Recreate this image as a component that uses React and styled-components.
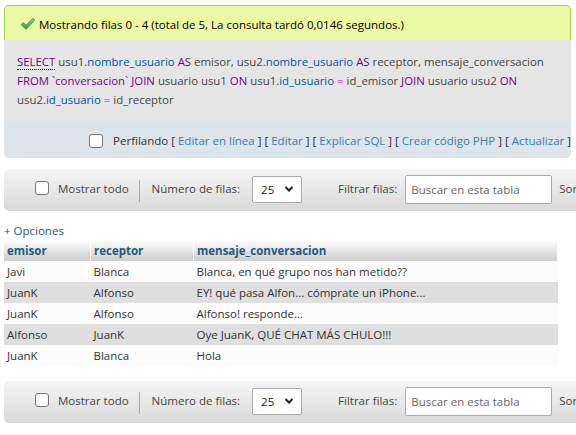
import React from "react";
import styled, { createGlobalStyle } from "styled-components";

const GlobalStyle = createGlobalStyle`
  html, body {
    margin: 0;
    padding: 0;
    background: #fff;
    overflow: hidden;
  }
  body {
    font-family: "Open Sans", "Noto Sans", sans-serif;
    font-size: 11.5px;
    color: #444;
  }
`;

const Page = styled.div`
  width: 576px;
  height: 435px;
  padding: 5px 0 0 4px;
  box-sizing: border-box;
  overflow: hidden;
`;

const Notice = styled.div`
  width: 567px;
  box-sizing: border-box;
`;

const Success = styled.div`
  display: flex;
  align-items: center;
  gap: 3px;
  height: 35px;
  padding: 2px 0 0 15px;
  box-sizing: border-box;
  background: #ebf8a4;
  border: 1px solid #a2d246;
  border-bottom: none;
  border-radius: 5px 5px 0 0;
  color: #000;
`;

const SqlBox = styled.div`
  background: #e5e5e5;
  padding: 12px 13px 14px;
  line-height: 19px;
  font-size: 11.4px;
  color: #444;
`;

const Kw = styled.span`
  color: #770088;
  ${(p) => p.$abbr && "border-bottom: 1px dotted #000;"}
`;

const Col = styled.span`
  color: #0055aa;
`;

const Op = styled.span`
  color: #ee00cc;
`;

const Tools = styled.div`
  display: flex;
  align-items: center;
  justify-content: flex-end;
  height: 35px;
  padding-right: 0;
  background: #dde4ea;
  border-radius: 0 0 5px 5px;
  color: #333;
`;

const Link = styled.a`
  color: #3a7ead;
  text-decoration: none;
`;

const Check = styled.span`
  display: inline-block;
  width: 12px;
  height: 12px;
  border: 1px solid #767676;
  border-radius: 3px;
  background: #fff;
  margin-right: ${(p) => p.$gap || 8}px;
`;

const NavBar = styled.div`
  display: flex;
  align-items: center;
  height: 42px;
  width: 600px;
  margin-top: ${(p) => p.$top}px;
  padding: 0 0 4px 31px;
  box-sizing: border-box;
  border-radius: 5px 0 0 5px;
  background: linear-gradient(#f6f6f6, #d9d9d9);
  color: #444;
  white-space: nowrap;
`;

const NavItem = styled.label`
  display: flex;
  align-items: center;
`;

const Sep = styled.span`
  display: inline-block;
  width: 1px;
  height: 22px;
  background: #aaa;
  margin: 6px 12px 0 10px;
`;

const SelectBox = styled.span`
  display: flex;
  align-items: center;
  justify-content: space-between;
  width: 50px;
  height: 27px;
  box-sizing: border-box;
  margin: 2px 0 0 12px;
  padding: 0 7px 0 8px;
  background: #fff;
  border: 1px solid #aaa;
  border-radius: 2px;
  color: #222;
`;

const Search = styled.span`
  display: flex;
  align-items: center;
  width: 147px;
  height: 29px;
  flex-shrink: 0;
  box-sizing: border-box;
  margin: 3px 7px 0 8px;
  padding-left: 5px;
  background: #fff;
  border: 1px solid #aaa;
  border-radius: 2px;
  color: #666;
`;

const FilterLabel = styled.span`
  margin-left: 36px;
`;

const Options = styled.div`
  margin-top: 11px;
  height: 18px;
  line-height: 18px;
  color: #235a81;
`;

const Table = styled.table`
  border-collapse: collapse;
  width: 554px;
`;

const Th = styled.th`
  text-align: left;
  font-weight: bold;
  color: #235a81;
  height: 21px;
  padding: 0 3px;
  background: linear-gradient(#fff, #cccccc);
  border-right: 1px solid #fff;
  width: ${(p) => p.$w}px;
`;

const Row = styled.tr`
  background: ${(p) => (p.$odd ? "#dfdfdf" : "#fcfcfd")};
`;

const Td = styled.td`
  height: 21px;
  padding: 0 3px;
  color: #333;
`;

const CheckIcon = () => (
  <svg width="16" height="14" viewBox="0 0 16 14">
    <defs>
      <linearGradient id="g" x1="0" y1="0" x2="0" y2="1">
        <stop offset="0" stopColor="#8ed08a" />
        <stop offset="1" stopColor="#3c9a3c" />
      </linearGradient>
    </defs>
    <path
      d="M1 7.5 L3.5 5.5 L6 8.2 L13 1 L15 3 L6 12.5 Z"
      fill="url(#g)"
      stroke="#3a8a3a"
      strokeWidth="0.6"
    />
  </svg>
);

const Chevron = () => (
  <svg width="10" height="8" viewBox="0 0 10 8">
    <path d="M1.5 2 L5 5.5 L8.5 2" fill="none" stroke="#222" strokeWidth="2" />
  </svg>
);

const rows = [
  ["Javi", "Blanca", "Blanca, en qué grupo nos han metido??"],
  ["JuanK", "Alfonso", "EY! qué pasa Alfon... cómprate un iPhone..."],
  ["JuanK", "Alfonso", "Alfonso! responde..."],
  ["Alfonso", "JuanK", "Oye JuanK, QUÉ CHAT MÁS CHULO!!!"],
  ["JuanK", "Blanca", "Hola"],
];

function Navigation({ top }) {
  return (
    <NavBar $top={top}>
      <NavItem>
        <Check $gap={9} />
        Mostrar todo
      </NavItem>
      <Sep />
      <span>Número de filas:</span>
      <SelectBox>
        25
        <Chevron />
      </SelectBox>
      <FilterLabel>Filtrar filas:</FilterLabel>
      <Search>Buscar en esta tabla</Search>
      <span>Sor</span>
    </NavBar>
  );
}

export default function App() {
  return (
    <>
      <GlobalStyle />
      <Page>
        <Notice>
          <Success>
            <CheckIcon />
            Mostrando filas 0 - 4 (total de 5, La consulta tardó 0,0146
            segundos.)
          </Success>
          <SqlBox>
            <Kw $abbr>SELECT</Kw> usu1.<Col>nombre_usuario</Col> <Kw>AS</Kw>{" "}
            emisor, usu2.<Col>nombre_usuario</Col> <Kw>AS</Kw> receptor,
            mensaje_conversacion <br />
            <Kw>FROM</Kw> <Kw>`conversacion`</Kw> <Kw>JOIN</Kw> usuario usu1{" "}
            <Kw>ON</Kw> usu1.<Col>id_usuario</Col> <Op>=</Op> id_emisor{" "}
            <Kw>JOIN</Kw> usuario usu2 <Kw>ON</Kw>
            <br />
            usu2.<Col>id_usuario</Col> <Op>=</Op> id_receptor
          </SqlBox>
          <Tools>
            <Check $gap={10} />
            <span>
              Perfilando [ <Link>Editar en línea</Link> ] [ <Link>Editar</Link>{" "}
              ] [ <Link>Explicar SQL</Link> ] [ <Link>Crear código PHP</Link> ]
              [ <Link>Actualizar</Link> ]
            </span>
          </Tools>
        </Notice>
        <Navigation top={11} />
        <Options>+ Opciones</Options>
        <Table>
          <thead>
            <tr>
              <Th $w={80}>emisor</Th>
              <Th $w={96}>receptor</Th>
              <Th>mensaje_conversacion</Th>
            </tr>
          </thead>
          <tbody>
            {rows.map((r, i) => (
              <Row key={i} $odd={i % 2 === 1}>
                <Td>{r[0]}</Td>
                <Td>{r[1]}</Td>
                <Td>{r[2]}</Td>
              </Row>
            ))}
          </tbody>
        </Table>
        <Navigation top={15} />
      </Page>
    </>
  );
}
